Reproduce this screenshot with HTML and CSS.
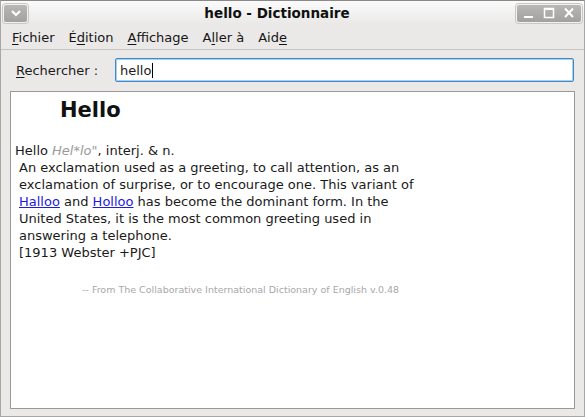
FILE: index.html
```html
<!DOCTYPE html>
<html>
<head>
<meta charset="utf-8">
<link rel="stylesheet" href="styles.css">
</head>
<body>
<div class="window">
  <div class="titlebar">
    <div class="tb-btn tb-menu">
      <svg width="12" height="8" viewBox="0 0 12 8"><path d="M2 2 L6 6 L10 2" fill="none" stroke="#fff" stroke-width="2"/></svg>
    </div>
    <div class="title">hello - Dictionnaire</div>
    <div class="tb-btn tb-group">
      <svg width="14" height="12" viewBox="0 0 14 12"><rect x="2" y="9" width="9" height="2" fill="#fff"/></svg>
      <svg width="14" height="12" viewBox="0 0 14 12"><rect x="2.5" y="1.5" width="9" height="9" fill="none" stroke="#fff" stroke-width="1.5"/><rect x="2" y="1" width="10" height="2" fill="#fff"/></svg>
      <svg width="14" height="12" viewBox="0 0 14 12"><path d="M3 1.5 L11 10 M11 1.5 L3 10" stroke="#fff" stroke-width="2"/></svg>
    </div>
  </div>
  <div class="menubar">
    <span class="menu"><u>F</u>ichier</span>
    <span class="menu">É<u>d</u>ition</span>
    <span class="menu"><u>A</u>ffichage</span>
    <span class="menu">A<u>l</u>ler à</span>
    <span class="menu">Aid<u>e</u></span>
  </div>
  <div class="searchrow">
    <label class="search-label"><u>R</u>echercher :</label>
    <div class="search-input">hello<span class="caret"></span></div>
  </div>
  <div class="content">
    <div class="heading">Hello</div>
    <div class="entry">
      <div class="first">Hello <i class="pron">Hel*lo"</i>, interj. &amp; n.</div>
      <div class="def">An exclamation used as a greeting, to call attention, as an<br>
      exclamation of surprise, or to encourage one. This variant of<br>
      <a class="link">Halloo</a> and <a class="link">Holloo</a> has become the dominant form. In the<br>
      United States, it is the most common greeting used in<br>
      answering a telephone.<br>
      [1913 Webster +PJC]</div>
    </div>
    <div class="source">-- From The Collaborative International Dictionary of English v.0.48</div>
  </div>
</div>
</body>
</html>
```
FILE: styles.css
```css
html, body {
  margin: 0;
  padding: 0;
  width: 585px;
  height: 417px;
  overflow: hidden;
  background: #ebe9e8;
}
.window {
  width: 585px;
  height: 417px;
  box-sizing: border-box;
  border: 1px solid #a9a7a6;
  border-top-color: #8c8a89;
  background: #ebe9e8;
  font-family: "DejaVu Sans", sans-serif;
  font-size: 13px;
  color: #1a1a1a;
  display: flex;
  flex-direction: column;
}
.titlebar {
  height: 24px;
  display: flex;
  align-items: center;
  justify-content: space-between;
  padding: 0 2px 0 2px;
  background: linear-gradient(#fbfbfb, #e9e8e7);
}
.tb-btn {
  box-sizing: border-box;
  background: linear-gradient(#b9b7b6, #a3a1a0);
  border: 1px solid #f2f2f2;
  border-radius: 3px;
  box-shadow: 0 0 0 1px #c9c7c6;
  height: 19px;
  display: flex;
  align-items: center;
  justify-content: center;
}
.tb-menu { width: 25px; }
.tb-group {
  width: 66px;
  justify-content: space-around;
  padding: 0 2px;
}
.title {
  font-weight: bold;
  font-size: 13.5px;
  color: #101010;
  padding-left: 10px;
}
.menubar {
  height: 24px;
  display: flex;
  align-items: center;
  padding-left: 4px;
  border-bottom: 1px solid #c6c4c3;
}
.menu {
  padding: 0 7px;
  color: #151515;
}
.menu u { text-decoration-thickness: 1px; text-underline-offset: 2px; }
.searchrow {
  display: flex;
  align-items: center;
  padding: 8px 10px 9px 15px;
}
.search-label {
  width: 99px;
}
.search-label u { text-underline-offset: 2px; }
.search-input {
  flex: 1;
  height: 24px;
  box-sizing: border-box;
  border: 1px solid #3e89c9;
  box-shadow: inset 0 0 0 1px #a8d0f0;
  border-radius: 2px;
  background: #fff;
  padding: 2px 4px;
  display: flex;
  align-items: center;
}
.caret {
  display: inline-block;
  width: 1px;
  height: 15px;
  background: #000;
  margin-left: 1px;
}
.content {
  margin: 0 9px 7px 9px;
  flex: 1;
  background: #fff;
  border: 1px solid #9a9898;
  padding: 0 4px;
  color: #1a1a1a;
}
.heading {
  font-size: 21px;
  font-weight: bold;
  padding: 6px 0 0 45px;
  height: 30px;
  color: #111;
}
.entry {
  margin-top: 14px;
  line-height: 17px;
}
.pron { color: #9a9a9a; }
.def { padding-left: 4px; }
.link { color: #1e1ae0; text-decoration: underline; }
.source {
  font-size: 9.5px;
  color: #a8a8a8;
  margin: 23px 0 0 67px;
}
```
